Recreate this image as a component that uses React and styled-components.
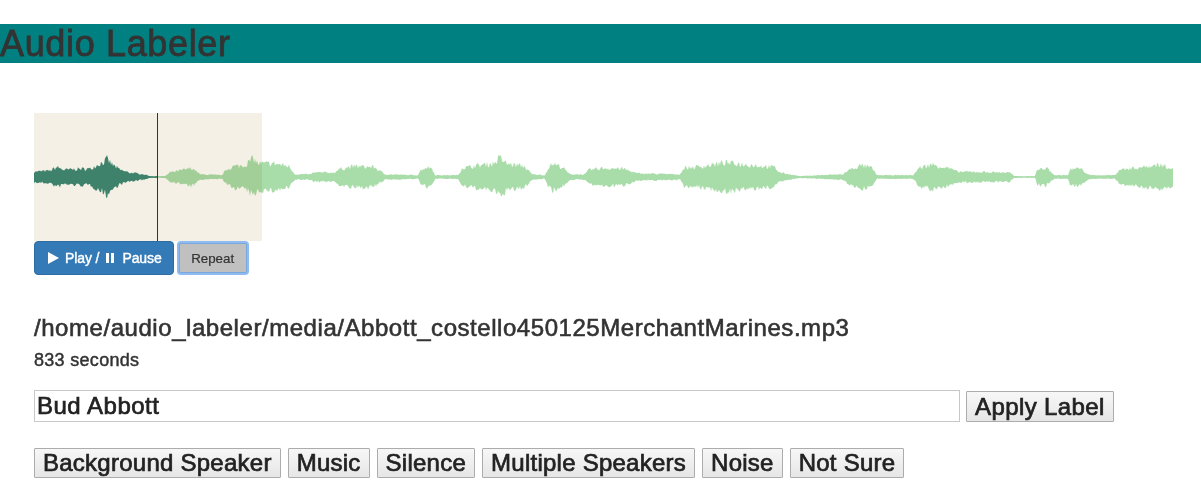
import React, { useMemo } from "react";
import styled, { createGlobalStyle } from "styled-components";

//================================================================//
//Global//
const GlobalStyle = createGlobalStyle`
  body {
    margin: 0;
    background: #fff;
    color: #333;
    font-family: "Liberation Sans", Arial, Helvetica, sans-serif;
  }
`;

//================================================================//
//Styled Components//
const Title = styled.h1`
  margin: 24px 0 0;
  height: 39px;
  line-height: 39px;
  background: #008080;
  color: #333;
  font-size: 36px;
  font-weight: normal;
  letter-spacing: 0.65px;
  -webkit-text-stroke: 0.8px #333;
`;

const Main = styled.main`
  display: flex;
  flex-direction: column;
  align-items: flex-start;
  padding: 50px 28px 0 34px;
`;

const WaveSvg = styled.svg`
  display: block;
`;

const Controls = styled.div`
  display: flex;
  align-items: center;
  gap: 5px;
`;

const PlayButton = styled.button`
  display: flex;
  align-items: center;
  height: 34px;
  padding: 0 11px 0 13px;
  border: 1px solid #2e6da4;
  border-radius: 4px;
  background: #337ab7;
  color: #fff;
  font-family: inherit;
  font-size: 14px;
  letter-spacing: -0.1px;
  -webkit-text-stroke: 0.4px #fff;
  white-space: nowrap;
`;

const Glyph = styled.svg`
  display: block;
  flex: none;
  margin: ${(p) => p.$margin};
`;

const RepeatButton = styled.button`
  width: 68px;
  height: 30px;
  padding: 0;
  border: 1px solid #7aa7dc;
  border-radius: 2px;
  background: #c0c0c0;
  box-shadow: 0 0 0 2px #8ebcf2;
  color: #333;
  font-family: inherit;
  font-size: 13.33px;
  -webkit-text-stroke: 0.2px #333;
`;

const FileName = styled.h3`
  margin: 40px 0 0;
  font-size: 24px;
  line-height: 26.4px;
  font-weight: normal;
  letter-spacing: 0.55px;
  -webkit-text-stroke: 0.6px #333;
`;

const Duration = styled.div`
  margin-top: 9px;
  font-size: 18px;
  line-height: 20px;
  letter-spacing: 0.3px;
  -webkit-text-stroke: 0.45px #333;
`;

const LabelRow = styled.div`
  display: flex;
  align-items: flex-end;
  gap: 6px;
  margin-top: 20px;
`;

const LabelInput = styled.input`
  box-sizing: border-box;
  width: 926px;
  height: 32px;
  padding: 0 2px;
  border: 1px solid #c8c8c8;
  border-radius: 0;
  outline: none;
  color: #222;
  font-family: inherit;
  font-size: 24px;
  letter-spacing: 0.5px;
  -webkit-text-stroke: 0.7px #222;
`;

const GreyButton = styled.button`
  box-sizing: border-box;
  height: ${(p) => (p.$tall ? "31px" : "30px")};
  padding: 0 8px;
  border: 1px solid #acacac;
  border-radius: 1px;
  background: linear-gradient(#f7f7f7, #e6e6e6);
  color: #222;
  font-family: inherit;
  font-size: 24px;
  line-height: 28px;
  letter-spacing: ${(p) => (p.$tall ? "0.4px" : "0.25px")};
  -webkit-text-stroke: 0.7px #222;
  white-space: nowrap;
`;

const QuickLabels = styled.div`
  display: flex;
  gap: 7px;
  margin-top: 26px;
`;

//================================================================//
//Waveform data//
const WAVE_W = 1139;
const WAVE_H = 128;
const MID = 64;
const CURSOR = 123;
const REGION = 228;

const ENVELOPE = [
  [0, 6], [16, 7], [23, 11], [30, 8], [45, 9], [56, 9], [64, 14], [70, 17], [73, 20],
  [78, 14], [86, 8], [95, 5], [110, 3], [116, 1], [131, 1], [136, 5], [145, 7], [158, 10],
  [163, 6], [166, 3], [188, 2], [192, 8], [200, 12], [211, 13], [216, 18], [219, 21],
  [224, 15], [240, 15], [255, 12], [261, 3], [276, 3], [280, 5], [300, 5], [306, 9],
  [320, 12], [340, 11], [351, 3], [384, 2], [386, 7], [392, 11], [398, 10], [401, 2],
  [424, 2], [428, 10], [445, 13], [460, 15], [466, 22], [472, 15], [490, 12], [498, 3],
  [511, 2], [514, 10], [519, 15], [528, 11], [536, 3], [551, 3], [555, 8], [570, 10],
  [590, 9], [603, 4], [646, 3], [650, 10], [670, 12], [691, 16], [710, 14], [740, 11],
  [746, 5], [766, 1], [784, 2], [809, 3], [815, 8], [828, 13], [838, 10], [843, 2],
  [879, 2], [885, 10], [898, 14], [905, 12], [915, 10], [923, 6], [976, 5], [980, 1],
  [1001, 1], [1003, 8], [1012, 10], [1021, 2], [1034, 2], [1036, 8], [1045, 10],
  [1056, 2], [1081, 2], [1085, 8], [1100, 10], [1115, 12], [1125, 14], [1132, 12],
  [1139, 10],
];

const ampAt = (x) => {
  for (let i = 1; i < ENVELOPE.length; i++) {
    const [x1, a1] = ENVELOPE[i];
    const [x0, a0] = ENVELOPE[i - 1];
    if (x <= x1) return a0 + ((a1 - a0) * (x - x0)) / (x1 - x0 || 1);
  }
  return 1;
};

const buildWavePath = () => {
  let seed = 7;
  const rnd = () => {
    seed = (seed * 16807) % 2147483647;
    return seed / 2147483647;
  };
  const top = [];
  const bottom = [];
  for (let x = 0; x <= WAVE_W; x++) {
    const a = ampAt(x) * 1.1;
    const up = Math.max(0.8, a * (0.62 + 0.38 * rnd()));
    const down = Math.max(0.8, a * (0.62 + 0.38 * rnd()));
    top.push(`${x},${(MID - up).toFixed(1)}`);
    bottom.push(`${x},${(MID + down).toFixed(1)}`);
  }
  return `M${top.join("L")}L${bottom.reverse().join("L")}Z`;
};

//================================================================//
//Waveform//
const Waveform = () => {
  const d = useMemo(buildWavePath, []);
  return (
    <WaveSvg width={WAVE_W} height={WAVE_H} viewBox={`0 0 ${WAVE_W} ${WAVE_H}`}>
      <defs>
        <clipPath id="played">
          <rect x="0" y="0" width={CURSOR} height={WAVE_H} />
        </clipPath>
        <clipPath id="unplayed">
          <rect x={CURSOR} y="0" width={WAVE_W - CURSOR} height={WAVE_H} />
        </clipPath>
      </defs>
      <rect x="0" y="0" width={REGION} height={WAVE_H} fill="#f4f0e5" />
      <g style={{ mixBlendMode: "multiply" }}>
        <path d={d} fill="#428a78" clipPath="url(#played)" />
        <path d={d} fill="#a8dca8" clipPath="url(#unplayed)" />
      </g>
      <rect x={CURSOR} y="0" width="1" height={WAVE_H} fill="#333" />
    </WaveSvg>
  );
};

//================================================================//
//Render//
const QUICK = ["Background Speaker", "Music", "Silence", "Multiple Speakers", "Noise", "Not Sure"];

const App = () => {
  return (
    <>
      <GlobalStyle />
      <Title>Audio Labeler</Title>
      <Main>
        <Waveform />
        <Controls>
          <PlayButton>
            <Glyph width="11" height="12" viewBox="0 0 11 12" $margin="0 6px 0 0">
              <path d="M0 0 L11 6 L0 12 Z" fill="#fff" />
            </Glyph>
            Play /
            <Glyph width="8" height="10" viewBox="0 0 8 10" $margin="0 8px 0 7px">
              <rect x="0" y="0" width="3" height="10" fill="#fff" />
              <rect x="5" y="0" width="3" height="10" fill="#fff" />
            </Glyph>
            Pause
          </PlayButton>
          <RepeatButton>Repeat</RepeatButton>
        </Controls>
        <FileName>/home/audio_labeler/media/Abbott_costello450125MerchantMarines.mp3</FileName>
        <Duration>833 seconds</Duration>
        <LabelRow>
          <LabelInput defaultValue="Bud Abbott" />
          <GreyButton $tall>Apply Label</GreyButton>
        </LabelRow>
        <QuickLabels>
          {QUICK.map((label) => (
            <GreyButton key={label}>{label}</GreyButton>
          ))}
        </QuickLabels>
      </Main>
    </>
  );
};

export default App;
